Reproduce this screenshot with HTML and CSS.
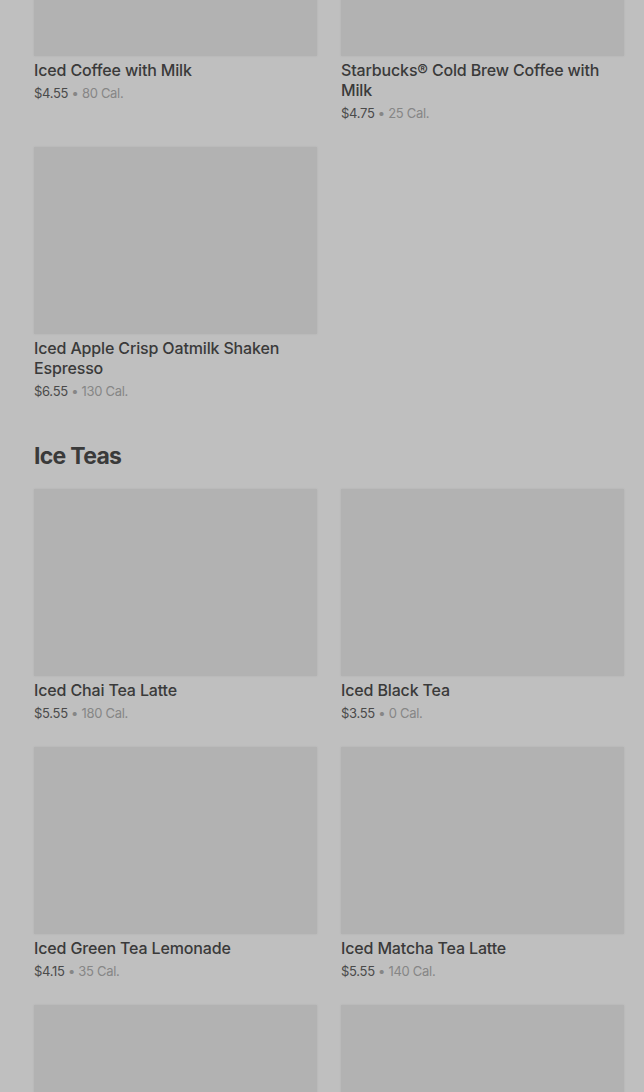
FILE: index.html
```html
<!DOCTYPE html>
<html lang="en">
<head>
    <meta charset="UTF-8">
    <meta name="viewport" content="width=device-width, initial-scale=1.0">
    <title>Menu</title>
    <link rel="stylesheet" href="styles.css">
</head>
<body>

    <main class="menu">
        <section class="menu-section">
            <div class="item-grid">
                <div class="item">
                    <div class="item-image"></div>
                    <div class="item-name">Iced Coffee with Milk</div>
                    <div class="item-meta"><span class="price">$4.55</span> • 80 Cal.</div>
                </div>
                <div class="item">
                    <div class="item-image"></div>
                    <div class="item-name">Starbucks® Cold Brew Coffee with Milk</div>
                    <div class="item-meta"><span class="price">$4.75</span> • 25 Cal.</div>
                </div>
                <div class="item">
                    <div class="item-image"></div>
                    <div class="item-name">Iced Apple Crisp Oatmilk Shaken Espresso</div>
                    <div class="item-meta"><span class="price">$6.55</span> • 130 Cal.</div>
                </div>
            </div>
        </section>

        <section class="menu-section">
            <h2>Ice Teas</h2>
            <div class="item-grid">
                <div class="item">
                    <div class="item-image"></div>
                    <div class="item-name">Iced Chai Tea Latte</div>
                    <div class="item-meta"><span class="price">$5.55</span> • 180 Cal.</div>
                </div>
                <div class="item">
                    <div class="item-image"></div>
                    <div class="item-name">Iced Black Tea</div>
                    <div class="item-meta"><span class="price">$3.55</span> • 0 Cal.</div>
                </div>
                <div class="item">
                    <div class="item-image"></div>
                    <div class="item-name">Iced Green Tea Lemonade</div>
                    <div class="item-meta"><span class="price">$4.15</span> • 35 Cal.</div>
                </div>
                <div class="item">
                    <div class="item-image"></div>
                    <div class="item-name">Iced Matcha Tea Latte</div>
                    <div class="item-meta"><span class="price">$5.55</span> • 140 Cal.</div>
                </div>
                <!-- next row, only the pictures reach the fold -->
                <div class="item">
                    <div class="item-image"></div>
                </div>
                <div class="item">
                    <div class="item-image"></div>
                </div>
            </div>
        </section>
    </main>

</body>
</html>
```

FILE: styles.css
```css
body {
    background-color: #bfbfbf;
    color: #3a3a3a;
    font-family: 'Inter', 'Noto Sans', sans-serif;
    margin: 0;
    padding: 0;
    height: 1092px;
    overflow: hidden;
}

.menu {
    /* page is scrolled: first image row sits partly above the fold */
    margin-top: -131px;
    padding: 0 20px 0 34px;
}

.menu-section h2 {
    font-size: 23px;
    line-height: 32px;
    font-weight: 700;
    letter-spacing: -0.7px;
    color: #3a3a3a;
    margin: 39px 0 17px;
}

.item-grid {
    display: grid;
    grid-template-columns: 283px 283px;
    column-gap: 24px;
    row-gap: 24px;
}

.item-image {
    height: 187px;
    background-color: #b2b2b2;
    box-shadow: 0 0 2px rgba(0, 0, 0, 0.08);
    margin-bottom: 4px;
}

.item-name {
    font-size: 16px;
    line-height: 20px;
    font-weight: 500;
    letter-spacing: -0.15px;
    color: #3a3a3a;
}

.item-meta {
    font-size: 13px;
    line-height: 20px;
    letter-spacing: -0.3px;
    margin-top: 3px;
    color: #868686;
}

.item-meta .price {
    color: #4a4a4a;
}
```
